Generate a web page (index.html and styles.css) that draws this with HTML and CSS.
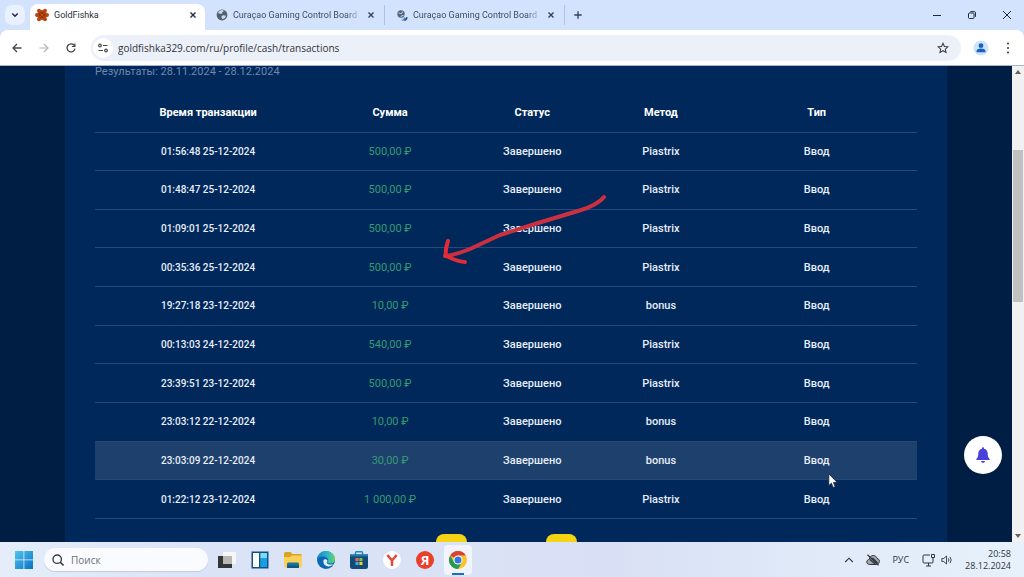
FILE: index.html
```html
<!DOCTYPE html>
<html lang="ru">
<head>
<meta charset="utf-8">
<title>GoldFishka</title>
<meta name="viewport" content="width=device-width, initial-scale=1">
<link rel="stylesheet" href="styles.css">
</head>
<body>
<header class="tabstrip">
  <button class="tab-search" aria-label="Поиск вкладок"><svg width="8" height="8" viewBox="0 0 8 8"><path d="M1.3 2.5 4 5.2 6.7 2.5" fill="none" stroke="#1f2a3d" stroke-width="1.5"/></svg></button>
  <div class="tab tab-active">
    <svg class="favicon" width="14" height="14" viewBox="0 0 14 14"><g fill="#b9470f"><circle cx="7" cy="7" r="5"/><circle cx="4" cy="2.7" r="2"/><circle cx="10" cy="2.7" r="2"/><circle cx="12" cy="7" r="2"/><circle cx="2" cy="7" r="2"/><circle cx="4" cy="11.3" r="2"/><circle cx="10" cy="11.3" r="2"/></g><circle cx="7" cy="7" r="3" fill="#8d3009"/><path d="m5 4.800 4 4.400M9 4.800 5 9.200" stroke="#c9560f" stroke-width="1"/></svg>
    <span class="tab-title">GoldFishka</span>
    <button class="close" aria-label="Закрыть"><svg width="8" height="8" viewBox="0 0 8 8"><path d="m1.5 1.5 5 5m0-5-5 5" stroke="#222c3c" stroke-width="1.4"/></svg></button>
  </div>
  <div class="tab">
    <svg class="favicon" width="12" height="12" viewBox="0 0 12 12"><circle cx="6" cy="6" r="5.4" fill="#56606d"/><path d="M2 4c1 .2 1.700 1 3 1s.8-1.600 2.200-2.200c.8-.3 0-1.300-.2-1.700C4.800.9 2.700 2 2 4Zm4.500 2.600c1-.6 2.300 0 3.500.2-.3 1.700-1.900 3.200-3.600 3.500.2-1-.9-1.100-1-2 0-.8.400-1.300 1.100-1.700Z" fill="#c6d8f3"/></svg>
    <span class="tab-title tab-fade">Curaçao Gaming Control Board</span>
    <button class="close" aria-label="Закрыть"><svg width="8" height="8" viewBox="0 0 8 8"><path d="m1.500 1.500 5 5m0-5-5 5" stroke="#35415a" stroke-width="1.400"/></svg></button>
  </div>
  <div class="tab">
    <svg class="favicon" width="12" height="12" viewBox="0 0 12 12"><circle cx="5" cy="5" r="3.700" fill="#566579"/><path d="M2.500 4c1.500 0 2 1 3 .4S6 2.800 7 2.600M5 8c0-1 1-1.600 2.500-1.400" stroke="#d3e3fd" fill="none"/><path d="M8.300 11.400A4.500 4.500 0 0 0 11 8.200" stroke="#28527c" stroke-width="1.700" fill="none"/><path d="M5.600 11h2.600V8.300" stroke="#397bbb" stroke-width="1.200" fill="none"/></svg>
    <span class="tab-title tab-fade">Curaçao Gaming Control Board</span>
    <button class="close" aria-label="Закрыть"><svg width="8" height="8" viewBox="0 0 8 8"><path d="m1.500 1.500 5 5m0-5-5 5" stroke="#35415a" stroke-width="1.400"/></svg></button>
  </div>
  <button class="new-tab" aria-label="Новая вкладка"><svg width="8" height="8" viewBox="0 0 8 8"><path d="M4 .3v7.400M.3 4h7.400" stroke="#35415a" stroke-width="1.300"/></svg></button>
  <div class="window-controls">
    <button aria-label="Свернуть"><svg width="8" height="8" viewBox="0 0 8 8"><path d="M0 4.500h8" stroke="#1f2a3d"/></svg></button>
    <button aria-label="Восстановить"><svg width="8" height="8" viewBox="0 0 8 8"><rect x=".5" y="2" width="5.500" height="5.500" rx="1" fill="none" stroke="#1f2a3d"/><path d="M2.300.6h4c.8 0 1.200.5 1.200 1.200v4" fill="none" stroke="#1f2a3d"/></svg></button>
    <button aria-label="Закрыть окно"><svg width="8" height="8" viewBox="0 0 8 8"><path d="m0 0 8 8m0-8L0 8" stroke="#1f2a3d"/></svg></button>
  </div>
</header>
<nav class="toolbar">
  <button class="tool" aria-label="Назад"><svg width="10" height="10" viewBox="0 0 10 10"><path d="M9.500 5H1.200M5 1 1 5l4 4" fill="none" stroke="#44494f" stroke-width="1.300"/></svg></button>
  <button class="tool" aria-label="Вперёд"><svg width="10" height="10" viewBox="0 0 10 10"><path d="M.5 5h8.300M5 1l4 4-4 4" fill="none" stroke="#b5b8bc" stroke-width="1.200"/></svg></button>
  <button class="tool" aria-label="Обновить"><svg width="10" height="10" viewBox="0 0 10 10"><path d="M8.400 2.700A4 4 0 1 0 9 5.700" fill="none" stroke="#3f4449" stroke-width="1.300"/><path d="M9.500.5v3.600H5.900V2.900h2.400V.5Z" fill="#3f4449"/></svg></button>
  <div class="address">
    <button class="site-info" aria-label="Сведения о сайте"><svg width="10" height="10" viewBox="0 0 10 10"><g fill="none" stroke="#454a50" stroke-width="1.200"><circle cx="2" cy="2.500" r="1.300"/><path d="M5 2.500h4.500M.5 7.500H5"/><circle cx="8" cy="7.500" r="1.300"/></g></svg></button>
    <input class="url" type="text" aria-label="Адрес" value="goldfishka329.com/ru/profile/cash/transactions">
    <button class="star" aria-label="В закладки"><svg width="12" height="12" viewBox="0 0 12 12"><path d="m6 1.300 1.400 3.100 3.400.4-2.500 2.300.7 3.300-3-1.700-3 1.700.7-3.300-2.500-2.300 3.400-.4Z" fill="none" stroke="#42474d" stroke-width="1.100"/></svg></button>
  </div>
  <button class="avatar" aria-label="Профиль"><svg width="16" height="16" viewBox="0 0 16 16"><circle cx="8" cy="8" r="7.500" fill="#cfe2fc"/><circle cx="8" cy="5.700" r="2.400" fill="#1762bc"/><path d="M3.500 12.300V11c0-1.700 2.500-2.500 4.500-2.500s4.500.8 4.500 2.500v1.300Z" fill="#1762bc"/></svg></button>
  <button class="menu" aria-label="Меню"><svg width="4" height="12" viewBox="0 0 4 12"><g fill="#42474d"><circle cx="2" cy="1.500" r="1.100"/><circle cx="2" cy="6" r="1.100"/><circle cx="2" cy="10.500" r="1.100"/></g></svg></button>
</nav>
<div class="viewport">
  <main class="page">
    <section class="panel">
      <p class="results">Результаты: 28.11.2024 - 28.12.2024</p>
      <table class="transactions">
        <colgroup><col class="c-time"><col class="c-sum"><col class="c-status"><col class="c-method"><col class="c-type"></colgroup>
        <thead><tr><th>Время транзакции</th><th>Сумма</th><th>Статус</th><th>Метод</th><th>Тип</th></tr></thead>
        <tbody>
          <tr><td class="time">01:56:48 25-12-2024</td><td class="sum">500,00 ₽</td><td>Завершено</td><td>Piastrix</td><td>Ввод</td></tr>
          <tr><td class="time">01:48:47 25-12-2024</td><td class="sum">500,00 ₽</td><td>Завершено</td><td>Piastrix</td><td>Ввод</td></tr>
          <tr><td class="time">01:09:01 25-12-2024</td><td class="sum">500,00 ₽</td><td>Завершено</td><td>Piastrix</td><td>Ввод</td></tr>
          <tr><td class="time">00:35:36 25-12-2024</td><td class="sum">500,00 ₽</td><td>Завершено</td><td>Piastrix</td><td>Ввод</td></tr>
          <tr><td class="time">19:27:18 23-12-2024</td><td class="sum">10,00 ₽</td><td>Завершено</td><td>bonus</td><td>Ввод</td></tr>
          <tr><td class="time">00:13:03 24-12-2024</td><td class="sum">540,00 ₽</td><td>Завершено</td><td>Piastrix</td><td>Ввод</td></tr>
          <tr><td class="time">23:39:51 23-12-2024</td><td class="sum">500,00 ₽</td><td>Завершено</td><td>Piastrix</td><td>Ввод</td></tr>
          <tr><td class="time">23:03:12 22-12-2024</td><td class="sum">10,00 ₽</td><td>Завершено</td><td>bonus</td><td>Ввод</td></tr>
          <tr class="hovered"><td class="time">23:03:09 22-12-2024</td><td class="sum">30,00 ₽</td><td>Завершено</td><td>bonus</td><td>Ввод</td></tr>
          <tr><td class="time">01:22:12 23-12-2024</td><td class="sum">1 000,00 ₽</td><td>Завершено</td><td>Piastrix</td><td>Ввод</td></tr>
        </tbody>
      </table>
      <div class="pager"><button aria-label="Предыдущая страница"></button><button aria-label="Следующая страница"></button></div>
    </section>
    <button class="bell" aria-label="Уведомления"><svg width="16" height="16" viewBox="0 0 16 16"><path d="M8 .3c.6 0 1 .4 1 1v.5c2.300.5 3.700 2.300 3.700 4.700 0 2.800.6 4.300 2 5.600v1H1.300v-1c1.400-1.300 2-2.800 2-5.600 0-2.400 1.400-4.200 3.700-4.700v-.5c0-.6.4-1 1-1ZM6 13.900h4c0 1.100-.9 1.900-2 1.900s-2-.8-2-1.900Z" fill="#4840dc"/></svg></button>
  </main>
  <div class="scrollbar"><svg width="6" height="4" viewBox="0 0 6 4"><path d="m0 4 3-4 3 4Z" fill="#606060"/></svg><span class="thumb"></span><svg width="6" height="4" viewBox="0 0 6 4"><path d="m0 0 3 4 3-4Z" fill="#606060"/></svg></div>
  <svg class="stroke" width="170" height="76" viewBox="0 0 170 76"><path d="M164 6c-4 5-14 11-26 14L98 32 60 44 30 58c-10 4-17 6-25 7" fill="none" stroke="#cb3040" stroke-width="4" stroke-linecap="round" stroke-linejoin="round"/><path d="M8 50C6 56 5 60 6 65c5 2 12 6 19 6" fill="none" stroke="#e12b37" stroke-width="4" stroke-linecap="round" stroke-linejoin="round"/></svg>
  <svg class="cursor" width="10" height="16" viewBox="0 0 10 16"><path d="M.8.900v11.600l2.600-2.300 1.800 4.300 2-.8-1.800-4.300h3.800Z" fill="#fff" stroke="#15233c" stroke-width=".8"/></svg>
</div>
<footer class="taskbar">
  <button class="start" aria-label="Пуск"><svg width="18" height="18" viewBox="0 0 18 18"><defs><linearGradient id="win" x2="1" y2="1"><stop stop-color="#51c5ee"/><stop offset="1" stop-color="#0872c4"/></linearGradient></defs><path d="M0 0h8.500v8.500H0Zm9.300 0H18v8.500H9.300ZM0 9.300h8.500V18H0Zm9.300 0H18V18H9.300Z" fill="url(#win)"/></svg></button>
  <label class="search"><svg width="12" height="12" viewBox="0 0 12 12"><circle cx="5.200" cy="5.200" r="4.200" fill="none" stroke="#3a3f47" stroke-width="1.400"/><path d="m8.300 8.300 3.200 3.200" stroke="#3a3f47" stroke-width="1.600"/></svg><input type="text" placeholder="Поиск" aria-label="Поиск"></label>
  <div class="apps">
    <button class="app" aria-label="Представление задач"><svg width="20" height="18" viewBox="0 0 20 18"><rect x="6" y="1" width="13" height="12" rx="1" fill="#f7f7f7"/><path d="M1 5h14v12H1Z" fill="#333639"/><path d="M6 5h9v8H6Z" fill="#b7b7b5"/></svg></button>
    <button class="app" aria-label="Виджеты"><svg width="18" height="18" viewBox="0 0 18 18"><rect x=".5" y=".5" width="17" height="17" fill="#0d5280"/><path d="M2 2h6v14H2Z" fill="#fff"/><path d="M9.300 2H16v5.500H9.300Z" fill="#79dafa"/><path d="M9.300 7.500H16V16H9.300Z" fill="#189fe3"/></svg></button>
    <button class="app" aria-label="Проводник"><svg width="18" height="18" viewBox="0 0 18 18"><path d="M0 2.500Q0 1 1.500 1h5l2 2H16q2 0 2 2v9H0Z" fill="#d9a421"/><path d="M0 6h6l2-1.500h10V15q0 1.500-1.500 1.500h-15Q0 16.500 0 15Z" fill="#fad158"/><path d="M3 17v-4q0-1.500 1.500-1.500h9q1.500 0 1.500 1.500v4Z" fill="#18739f"/><path d="M3 14.500h12V17H3Z" fill="#0d5784"/></svg></button>
    <button class="app" aria-label="Edge"><svg width="18" height="18" viewBox="0 0 18 18"><defs><linearGradient id="edge" x2="1"><stop stop-color="#1687cc"/><stop offset=".55" stop-color="#27b3cd"/><stop offset="1" stop-color="#6ad75a"/></linearGradient></defs><circle cx="9" cy="9" r="9" fill="#0d66b2"/><path d="M0 8C.5 3.300 4.300 0 9 0c5 0 9 3.700 9 8 0 3-2.200 4.600-5 4.600-2.400 0-3.300-1-2.400-2C12 8.300 10 6 7.200 5.600 4 5.200 1 6.500 0 8Z" fill="url(#edge)"/><path d="M6.500 9.300c-.8 3.700 2 6.300 5.500 6.100 2-.1 3.500-1 4.700-2.300-2 .9-5 .6-6.500-.7-1-1-.5-2 .3-2.400-.2-1.700-3.300-2.300-4-.7Z" fill="#e2edfa"/></svg></button>
    <button class="app" aria-label="Магазин"><svg width="18" height="18" viewBox="0 0 18 18"><path d="M5.500 4V1.500Q5.500.7 6.300.7h5.400q.8 0 .8.800V4" fill="none" stroke="#198bc2" stroke-width="1.400"/><path d="M0 3.500h18v12q0 2.500-2.500 2.500h-13Q0 18 0 15.500Z" fill="#134a78"/><path d="M0 3.500h18v2H0Z" fill="#1b79b0"/><path d="M5.500 7H8.600v3.100H5.500Z" fill="#ef6a40"/><path d="M9.400 7h3.100v3.100H9.400Z" fill="#80c342"/><path d="M5.500 10.900H8.600V14H5.500Z" fill="#32b0e8"/><path d="M9.400 10.900h3.100V14H9.400Z" fill="#fac83c"/></svg></button>
    <button class="app" aria-label="Яндекс Браузер"><svg width="18" height="18" viewBox="0 0 18 18"><circle cx="9" cy="9" r="9" fill="#fff"/><path d="m4.300 4 4.700 5.500V15m0-5.500L13.700 4" stroke="#df4a3d" stroke-width="2.500" fill="none"/></svg></button>
    <button class="app" aria-label="Яндекс"><span class="ya">Я</span></button>
    <button class="app app-active" aria-label="Chrome"><svg width="18" height="18" viewBox="0 0 18 18"><circle cx="9" cy="9" r="9" fill="#fbc32d"/><path d="M9 9 1.200 4.500A9 9 0 0 1 16.800 4.500H9Z" fill="#d84436"/><path d="M1.200 4.500A9 9 0 0 0 9 18l3.900-6.700L5.100 11.300Z" fill="#259b56"/><circle cx="9" cy="9" r="4.500" fill="#fff"/><circle cx="9" cy="9" r="3.500" fill="#3478df"/></svg></button>
  </div>
  <div class="tray">
    <button class="tray-button" aria-label="Скрытые значки"><svg width="10" height="8" viewBox="0 0 10 8"><path d="m1.200 6 3.800-3.800L8.800 6" fill="none" stroke="#30343b" stroke-width="1.100"/></svg></button>
    <button class="tray-button" aria-label="OneDrive"><svg width="14" height="12" viewBox="0 0 14 12"><path d="M3.500 10.500C1.800 10.500.8 9.300.8 8s1-2.500 2.500-2.600C3.500 3 5.300 1.500 7.300 1.500s3.300 1.300 3.700 3c1.500.1 2.400 1.300 2.400 2.800 0 1.800-1.300 3.200-3 3.200Z" fill="#a3a7ae" stroke="#30343b"/><path d="m1.500.8 11 10.500M4 5.500 9 10M6.500 4l5 5" stroke="#30343b" stroke-width="1.200"/></svg></button>
    <button class="lang">РУС</button>
    <button class="tray-button tray-net" aria-label="Сеть и звук"><svg width="14" height="14" viewBox="0 0 14 14"><path d="M8 2H2Q1 2 1 3v6q0 1 1 1h8q1 0 1-1V7M4 13h5M6.500 10v3M9.500 1.500h3v3h-3ZM11 4.500V7" fill="none" stroke="#30343b"/></svg><svg width="12" height="12" viewBox="0 0 12 12"><path d="M.8 4.500h2L5.500 2v8L2.800 7.500h-2ZM7.300 4.300q1.200 1.700 0 3.400M9 2.800q2.400 3.200 0 6.400" fill="none" stroke="#30343b" stroke-width=".9"/></svg></button>
    <div class="clock"><time>20:58</time><time>28.12.2024</time></div>
  </div>
</footer>
</body>
</html>
```

FILE: styles.css
```css
* { box-sizing: border-box; }

body {
  margin: 0;
  height: 100vh;
  display: flex;
  flex-direction: column;
  overflow: hidden;
  background: #d3e3fd;
  font-family: "Open Sans", "Noto Sans", sans-serif;
}

button {
  display: flex;
  align-items: center;
  justify-content: center;
  flex: none;
  padding: 0;
  border: 0;
  background: none;
  color: inherit;
  font: inherit;
}

input {
  min-width: 0;
  padding: 0;
  border: 0;
  outline: 0;
  background: none;
  font: inherit;
}

svg { display: block; flex: none; }

/* Tabs */
.tabstrip {
  display: flex;
  align-items: center;
  flex: none;
  height: 30px;
  padding-left: 5px;
  color: #414d61;
  font-family: Roboto, sans-serif;
  font-size: 9px;
}

.tab-search {
  width: 20px;
  height: 20px;
  margin-right: 5px;
  border-radius: 7px;
  background: #e9f1fe;
}

.tab {
  display: flex;
  align-items: center;
  flex: 0 1 180px;
  gap: 5px;
  min-width: 0;
  height: 20px;
  padding: 0 9px 0 11px;
  border-right: 1px solid #a9c2ea;
}

.tab-active {
  flex-basis: 175px;
  height: 26px;
  align-self: flex-end;
  padding: 0 8px 4px 5px;
  border: 0;
  border-radius: 8px 8px 0 0;
  background: #fff;
  color: #272d38;
}

.tab-title {
  flex: 1;
  min-width: 0;
  overflow: hidden;
  white-space: nowrap;
}

.tab-fade {
  -webkit-mask-image: linear-gradient(to right, #000 88%, transparent);
  mask-image: linear-gradient(to right, #000 88%, transparent);
}

.close { width: 8px; height: 20px; }
.new-tab { width: 20px; height: 20px; margin-left: 3px; }
.window-controls { display: flex; margin-left: auto; }
.window-controls button { width: 35px; height: 30px; }

/* Address row */
.toolbar {
  display: flex;
  align-items: center;
  flex: none;
  height: 36px;
  padding: 0 10px 0 8px;
  border-bottom: 1px solid #a9b5c9;
  border-radius: 8px 8px 0 0;
  background: #fff;
}

.tool { width: 18px; height: 20px; margin-right: 9px; }

.address {
  display: flex;
  align-items: center;
  flex: 1;
  min-width: 0;
  height: 26px;
  margin-left: 2px;
  padding: 0 12px 0 2px;
  border-radius: 13px;
  background: #ecf0f9;
}

.site-info {
  width: 20px;
  height: 20px;
  margin-right: 5px;
  border-radius: 50%;
  background: #fff;
}

.url { flex: 1; color: #30343a; font-size: 10px; }
.avatar { width: 16px; margin-left: 12px; }
.menu { width: 12px; margin-left: 13px; }

/* Page */
.viewport {
  position: relative;
  display: flex;
  flex: 1;
  min-height: 0;
}

.page {
  flex: 1;
  min-width: 0;
  overflow: hidden;
  padding: 0 65px;
  background: #001d44;
  color: #e8eef8;
  font-family: Roboto, sans-serif;
  font-size: 11px;
}

.panel {
  min-height: 100%;
  padding: 0 30px;
  background: #00285b;
}

.results {
  margin: 0;
  color: #7188ad;
  line-height: 12px;
}

.transactions {
  width: 100%;
  height: 426px;
  margin-top: 15px;
  table-layout: fixed;
  border-collapse: collapse;
  text-align: center;
  font-weight: 500;
}

.transactions th, .transactions td {
  padding: 0;
  border-bottom: 1px solid #264977;
}

.transactions th { height: 39px; color: #fff; font-weight: 700; }
.transactions .time { font-size: 10px; }
.transactions .sum { color: #349c72; font-weight: 400; }
.transactions .hovered { background: #1e406d; }
.c-time { width: 27.5%; }
.c-sum { width: 16.8%; }
.c-status { width: 17.8%; }
.c-method { width: 13.5%; }
.c-type { width: 24.4%; }

.pager {
  display: flex;
  justify-content: center;
  gap: 79px;
  margin-top: 15px;
}

.pager button {
  width: 31px;
  height: 31px;
  border-radius: 8px;
  background: #f5d414;
}

.bell {
  position: absolute;
  right: 22px;
  bottom: 68px;
  width: 38px;
  height: 38px;
  border-radius: 50%;
  background: #fff;
}

.scrollbar {
  display: flex;
  flex-direction: column;
  align-items: center;
  flex: none;
  width: 12px;
  padding: 4px 0;
  background: #f1f1f1;
}

.thumb {
  width: 10px;
  height: 152px;
  margin: 76px 0 auto;
  background: #c1c1c1;
}

.stroke { position: absolute; left: 440px; top: 125px; }
.cursor { position: absolute; left: 828px; top: 407px; }

/* Taskbar */
.taskbar {
  display: flex;
  align-items: center;
  flex: none;
  height: 35px;
  padding: 0 13px 0 15px;
  background: linear-gradient(90deg, #e4edf9, #dbe4f7 20%, #d9e0f5 60%, #dfe9f8 78%, #e6f1fb);
  color: #30343b;
  font-size: 9px;
}

.start { width: 18px; margin-right: 11px; }

.search {
  display: flex;
  align-items: center;
  flex: 0 1 164px;
  gap: 7px;
  min-width: 0;
  height: 23px;
  padding: 0 8px;
  border-radius: 12px;
  background: #f9fbfe;
  box-shadow: 0 1px 1px #c3cddd;
}

.search input { flex: 1; font-size: 10px; }
.search input::placeholder { color: #69707b; opacity: 1; }

.apps { display: flex; gap: 5px; margin-left: 5px; }
.app { width: 28px; height: 30px; }

.app-active {
  border-radius: 4px;
  background: linear-gradient(#1a6fbe, #1a6fbe) center bottom / 12px 2px no-repeat #f1f4fc;
}

.ya {
  width: 18px;
  height: 18px;
  border-radius: 50%;
  background: #e8402c;
  color: #fff;
  font: 700 13px/18px "Open Sans", sans-serif;
}

.tray {
  display: flex;
  align-items: center;
  margin-left: auto;
}

.tray-button { height: 28px; margin-right: 12px; }
.lang { margin-right: 13px; }
.tray-net { gap: 5px; }

.clock {
  display: flex;
  flex-direction: column;
  align-items: flex-end;
  line-height: 12px;
}
```
